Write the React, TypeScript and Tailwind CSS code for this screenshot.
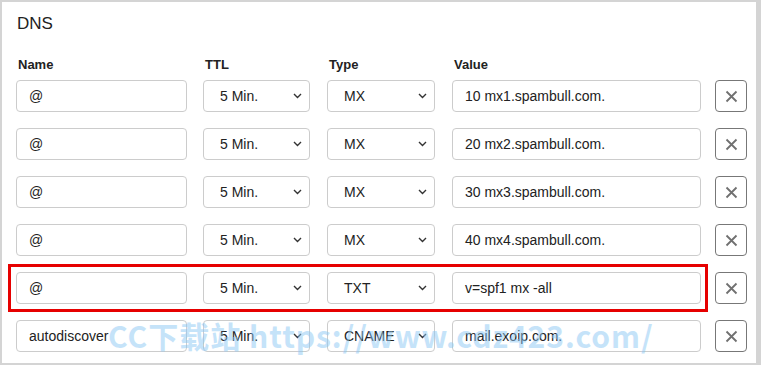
import React from "react";

const rows = [
  { name: "@", ttl: "5 Min.", type: "MX", value: "10 mx1.spambull.com." },
  { name: "@", ttl: "5 Min.", type: "MX", value: "20 mx2.spambull.com." },
  { name: "@", ttl: "5 Min.", type: "MX", value: "30 mx3.spambull.com." },
  { name: "@", ttl: "5 Min.", type: "MX", value: "40 mx4.spambull.com." },
  { name: "@", ttl: "5 Min.", type: "TXT", value: "v=spf1 mx -all", hl: true },
  { name: "autodiscover", ttl: "5 Min.", type: "CNAME", value: "mail.exoip.com." },
];

function Chevron() {
  return (
    <svg width="9" height="6" viewBox="0 0 9 6">
      <path d="M1 1l3.5 3.5L8 1" stroke="#333" strokeWidth="1.4" fill="none" />
    </svg>
  );
}

function Select({ text, w }: { text: string; w: string }) {
  return (
    <div className={`${w} h-8 border border-[#cccccc] rounded-[4px] flex items-center justify-between pl-4 pr-[7px] text-[14px] text-[#222]`}>
      <span>{text}</span>
      <Chevron />
    </div>
  );
}

export default function App() {
  return (
    <div
      className="relative w-[761px] h-[365px] bg-white border-2 border-r-[5px] border-[#d4d4d4] overflow-hidden"
      style={{ fontFamily: '"Liberation Sans", Arial, sans-serif' }}
    >
      <div className="pl-[15px] pt-[12px] text-[17px] leading-[20px] text-[#222]">DNS</div>
      <div className="flex pl-[15px] pt-[23px] text-[13px] leading-[16px] font-bold text-[#222]">
        <div className="w-[171px] pl-px">Name</div>
        <div className="w-[107px] ml-4 pl-px">TTL</div>
        <div className="w-[108px] ml-[17px] pl-px">Type</div>
        <div className="w-[249px] ml-[17px] pl-px">Value</div>
      </div>
      <div className="flex flex-col gap-4 pl-[14px] pt-[7px]">
        {rows.map((r, i) => (
          <div key={i} className="relative flex items-center h-8">
            {r.hl && (
              <div className="absolute left-[-8px] top-[-8px] w-[700px] h-[48px] border-[3px] border-[#e60000]" />
            )}
            <div className="w-[171px] h-8 border border-[#cccccc] rounded-[4px] flex items-center pl-3 text-[14px] text-[#222]">
              {r.name}
            </div>
            <div className="ml-4">
              <Select text={r.ttl} w="w-[107px]" />
            </div>
            <div className="ml-[17px]">
              <Select text={r.type} w="w-[108px]" />
            </div>
            <div className="ml-[17px] w-[249px] h-8 border border-[#cccccc] rounded-[4px] flex items-center pl-3 text-[14px] text-[#222]">
              {r.value}
            </div>
            <div className="ml-[14px] w-8 h-8 border border-[#777] rounded-[4px] flex items-center justify-center">
              <svg width="13" height="13" viewBox="0 0 13 13">
                <path d="M1.5 1.5l10 10M11.5 1.5l-10 10" stroke="#707070" strokeWidth="1.8" />
              </svg>
            </div>
          </div>
        ))}
      </div>
      <div
        className="absolute left-[106px] top-[315px] text-[30px] leading-[36px] font-bold whitespace-nowrap text-[#8cc8f5] opacity-50 tracking-[1px]"
        style={{ fontFamily: '"Noto Sans CJK SC", "Noto Sans", sans-serif' }}
      >
        CC下载站 https://www.cdz423.com/
      </div>
    </div>
  );
}
